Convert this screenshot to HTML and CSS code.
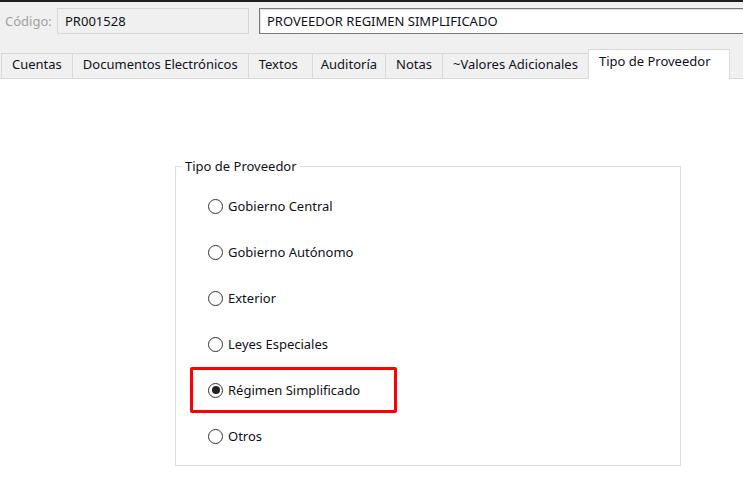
FILE: index.html
```html
<!DOCTYPE html>
<html>
<head>
<title>Proveedor</title>
<link rel="stylesheet" href="styles.css">
</head>
<body>

<div id="window">
  <div class="topbar"></div>

  <div class="header">
    <label class="code-label" for="code">Código:</label>
    <input id="code" class="field field-code" type="text" value="PR001528" disabled>
    <input id="name" class="field field-name" type="text" value="PROVEEDOR REGIMEN SIMPLIFICADO">
  </div>

  <div class="tabs">
    <div class="tab">Cuentas</div>
    <div class="tab">Documentos Electrónicos</div>
    <div class="tab wide">Textos</div>
    <div class="tab narrow">Auditoría</div>
    <div class="tab">Notas</div>
    <div class="tab">~Valores Adicionales</div>
    <div class="tab active">Tipo de Proveedor</div>
  </div>

  <div class="content">
    <fieldset class="group">
      <legend>Tipo de Proveedor</legend>
      <div class="option"><span class="radio"></span>Gobierno Central</div>
      <div class="option"><span class="radio"></span>Gobierno Autónomo</div>
      <div class="option"><span class="radio"></span>Exterior</div>
      <div class="option"><span class="radio"></span>Leyes Especiales</div>
      <div class="option selected"><span class="radio checked"></span>Régimen Simplificado</div>
      <div class="option"><span class="radio"></span>Otros</div>
    </fieldset>
  </div>
</div>

</body>
</html>
```

FILE: styles.css
```css
html, body {
  margin: 0;
  height: 100%;
}

body {
  font-family: "Noto Sans", "Liberation Sans", sans-serif;
  font-size: 13px;
  color: #10101a;
  background-color: #f0f0f0;
  overflow: hidden;
}

#window {
  display: flex;
  flex-direction: column;
  height: 100%;
}

.topbar {
  height: 2px;
  background-color: #1e1e1e;
}

.header {
  display: flex;
  align-items: center;
  height: 26px;
  padding: 6px 0 0 0;
}

.code-label {
  color: #a0a0a0;
  margin-left: 5px;
  width: 52px;
}

.field {
  font-family: inherit;
  font-size: 13px;
  height: 26px;
  box-sizing: border-box;
  margin: 0;
  padding: 0 7px;
  outline: none;
}

.field-code {
  width: 192px;
  background-color: #f0f0f0;
  border: 1px solid #d6d6d6;
  color: #10101a;
}

.field-name {
  flex: 1;
  margin-left: 10px;
  margin-right: -20px;
  background-color: #fff;
  border: 1px solid #7a7a7a;
  box-shadow: inset 1px 1px 0 #e3e3e3;
  color: #10101a;
}

.tabs {
  display: flex;
  align-items: flex-end;
  height: 29px;
  margin-top: 15px;
  padding-left: 1px;
  border-bottom: 1px solid #d9d9d9;
}

.tab {
  height: 24px;
  line-height: 21px;
  padding: 0 10px;
  border: 1px solid #d9d9d9;
  border-bottom: none;
  border-left: none;
  background-color: #f0f0f0;
}

.tab:first-child {
  border-left: 1px solid #d9d9d9;
}

.tab.wide {
  padding: 0 14px 0 10px;
}

.tab.narrow {
  padding: 0 8px;
}

.tab.active {
  height: 29px;
  line-height: 23px;
  margin-bottom: -1px;
  margin-left: -1px;
  padding: 0 18px 0 10px;
  background-color: #fff;
  border-left: 1px solid #d9d9d9;
}

.content {
  flex: 1;
  background-color: #fff;
  padding: 78px 0 0 175px;
}

.group {
  width: 506px;
  box-sizing: border-box;
  margin: 0;
  padding: 8px 0 6px 6px;
  border: 1px solid #dcdcdc;
}

.group legend {
  padding: 0 3px;
}

.option {
  display: flex;
  align-items: center;
  width: 207px;
  height: 46px;
  box-sizing: border-box;
  margin-left: 8px;
  padding-left: 15px;
  border: 3px solid transparent;
  border-radius: 2px;
}

.option.selected {
  border-color: #f00;
}

.radio {
  width: 15px;
  height: 15px;
  box-sizing: border-box;
  border: 1px solid #333;
  border-radius: 50%;
  margin-right: 5px;
  display: flex;
  align-items: center;
  justify-content: center;
  background-color: #fff;
}

.radio.checked::after {
  content: "";
  width: 8px;
  height: 8px;
  border-radius: 50%;
  background-color: #222;
}
```
